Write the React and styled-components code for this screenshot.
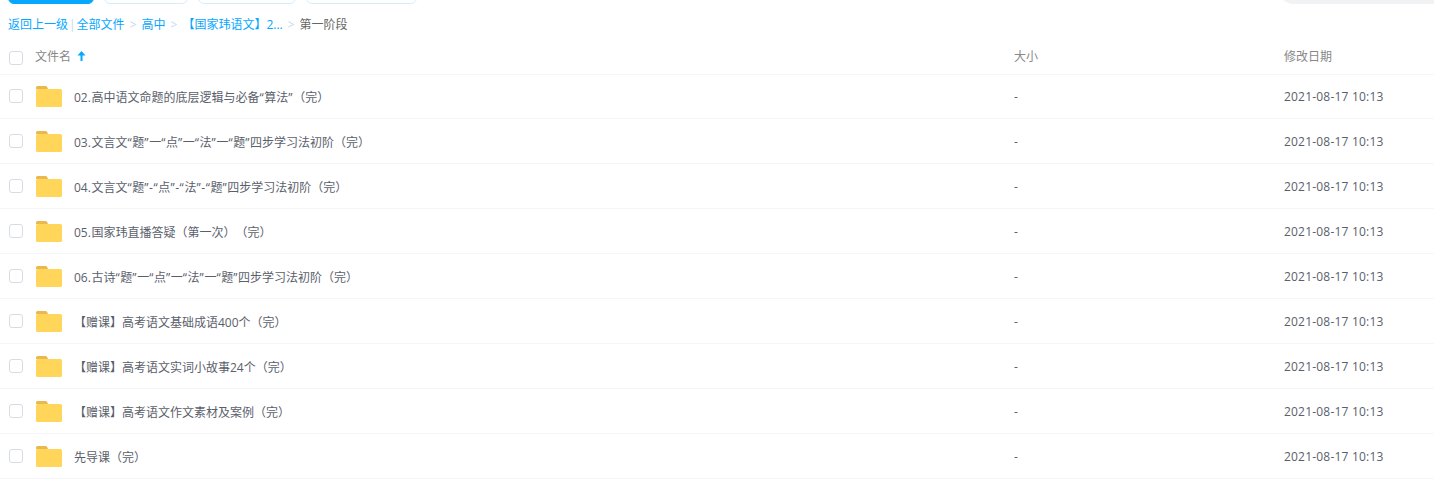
import React from "react";
import styled, { createGlobalStyle } from "styled-components";

const Global = createGlobalStyle`
  html, body { margin: 0; padding: 0; background: #fff; }
  body { font-family: "Open Sans", "Noto Sans CJK SC", sans-serif; font-size: 12px; color: #5a606b; text-spacing-trim: space-all; }
`;
const Page = styled.div`width: 1434px; height: 486px; overflow: hidden;`;
const Toolbar = styled.div`
  height: 4px; overflow: hidden; display: flex; align-items: flex-end; gap: 10px; padding-left: 8px; position: relative;
`;
const ToolButton = styled.div`
  width: ${p => p.$w}px; height: 32px; flex: none; box-sizing: border-box; border-radius: 6px;
  background: ${p => (p.$primary ? "#06a7ff" : "#fff")};
  border: 1px solid ${p => (p.$primary ? "#06a7ff" : "#d4eefd")};
`;
const Search = styled.div`
  width: 156px; height: 32px; margin-left: auto; flex: none; border-radius: 16px 0 0 16px; background: #f1f2f4;
`;
const Crumbs = styled.div`
  height: 20px; margin-top: 11px; padding-left: 8px; display: flex; align-items: center; line-height: 20px; white-space: pre;
`;
const CrumbLink = styled.span`color: #06a7ff;`;
const Sep = styled.span`color: #c4d8f4; margin: 0 ${p => p.$gap ?? 5}px;`;
const Current = styled.span`color: #666;`;
const Row = styled.div`
  display: grid; grid-template-columns: 35px 979px 270px 1fr; align-items: center; box-sizing: border-box;
  height: ${p => (p.$head ? 40 : 45)}px; padding-top: ${p => (p.$head ? 2 : 0)}px;
  margin-bottom: ${p => (p.$head ? -1 : 0)}px;
  border-bottom: 1px solid #f4f6fb;
`;
const Check = styled.span`
  display: block; width: 14px; height: 14px; margin-left: 9px; margin-top: ${p => (p.$head ? 5 : 0)}px; box-sizing: border-box;
  border: 1px solid #d6dbe4; border-radius: 3px; background: #fff;
`;
const NameCell = styled.div`display: flex; align-items: center; color: ${p => (p.$head ? "#888" : "#5a606b")};`;
const Folder = styled.svg`width: 26px; height: 21px; flex: none; margin: 1px 12px 0 1px;`;
const Arrow = styled.svg`width: 9px; height: 10px; margin-left: 6px;`;
const HeadText = styled.div`color: #888;`;
const Cell = styled.div`color: #5a606b; padding-top: 1px;`;
const DateCell = styled(Cell)`letter-spacing: 0.2px;`;
const NameText = styled.span`padding-top: 1px;`;
const Wide = styled.span`letter-spacing: 0.6px;`;

const names = [
  "02.高中语文命题的底层逻辑与必备“算法”（完）",
  "03.文言文“题”一“点”一“法”一“题”四步学习法初阶（完）",
  "04.文言文“题”-“点”-“法”-“题”四步学习法初阶（完）",
  "05.国家玮直播答疑（第一次）（完）",
  "06.古诗“题”一“点”一“法”一“题”四步学习法初阶（完）",
  "【赠课】高考语文基础成语400个（完）",
  "【赠课】高考语文实词小故事24个（完）",
  "【赠课】高考语文作文素材及案例（完）",
  "先导课（完）",
];

const FolderIcon = () => (
  <Folder viewBox="0 0 26 21">
    <path d="M0 1.500A1.500 1.500 0 0 1 1.500 0H9.500a2 2 0 0 1 1.600.8L12 3H0Z" fill="#e9b950" />
    <rect x="0" y="3" width="26" height="18" rx="1.500" fill="#ffd659" />
  </Folder>
);

const Name = ({ text }) => (
  <NameText>
    {text.split(/([“”.\-]+)/).map((part, i) => (i % 2 ? <Wide key={i}>{part}</Wide> : part))}
  </NameText>
);

export default function App() {
  return (
    <Page>
      <Global />
      <Toolbar>
        <ToolButton $primary $w={86} />
        <ToolButton $w={84} />
        <ToolButton $w={98} />
        <ToolButton $w={111} />
        <Search />
      </Toolbar>
      <Crumbs>
        <CrumbLink>返回上一级</CrumbLink>
        <Sep $gap={1}>|</Sep>
        <CrumbLink>全部文件</CrumbLink>
        <Sep>&gt;</Sep>
        <CrumbLink>高中</CrumbLink>
        <Sep>&gt;</Sep>
        <CrumbLink>【国家玮语文】2...</CrumbLink>
        <Sep>&gt;</Sep>
        <Current>第一阶段</Current>
      </Crumbs>
      <Row $head>
        <Check $head />
        <NameCell $head>
          文件名
          <Arrow viewBox="0 0 9 10">
            <path d="M4.500 0 8.500 4.500H5.500V10H3.500V4.500H.5Z" fill="#06a7ff" />
          </Arrow>
        </NameCell>
        <HeadText>大小</HeadText>
        <HeadText>修改日期</HeadText>
      </Row>
      {names.map(n => (
        <Row key={n}>
          <Check />
          <NameCell><FolderIcon /><Name text={n} /></NameCell>
          <Cell>-</Cell>
          <DateCell>2021-08-17 10:13</DateCell>
        </Row>
      ))}
    </Page>
  );
}
